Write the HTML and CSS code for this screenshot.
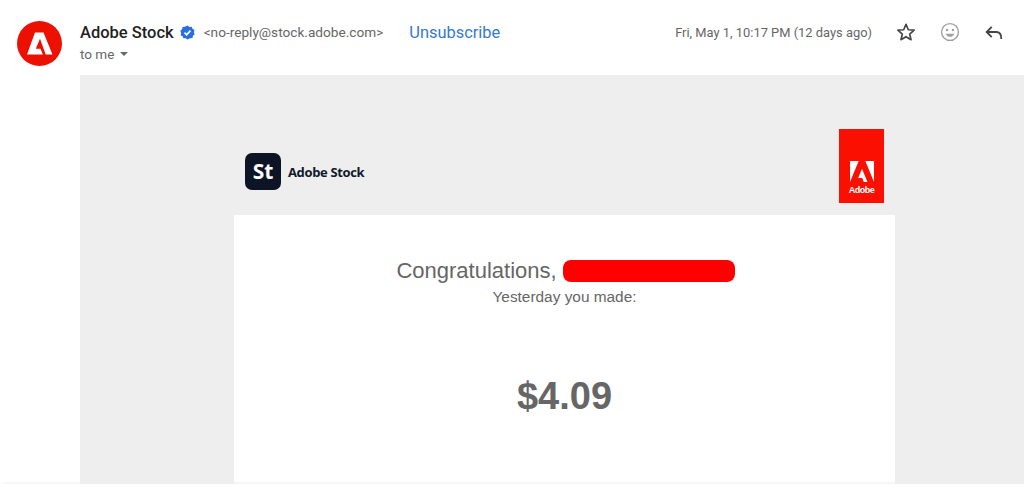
FILE: index.html
```html
<!DOCTYPE html>
<html lang="en">
<head>
<meta charset="utf-8">
<title>Adobe Stock email</title>
<link rel="stylesheet" href="styles.css">
</head>
<body>
<div class="page">
  <header class="mail-head">
    <svg class="avatar" viewBox="0 0 45 45" aria-hidden="true">
      <circle cx="22.5" cy="22.5" r="22.500" fill="#eb1000"/>
      <path fill="#fff" d="M18 11.500h8.500L35.500 33.500h-6.800l-5.700-15.800-4.200 10h4.700l2.400 5.800H10z"/>
    </svg>
    <div class="sender">
      <div class="sender-line">
        <span class="name">Adobe Stock</span>
        <svg class="verified" viewBox="0 0 16 16" aria-hidden="true">
          <path fill="#2a6fdb" d="M8 .6l2 1.400 2.400-.2.900 2.200 2.100 1.200-.6 2.400.9 2.300-1.900 1.500-.5 2.400-2.400.3L8 15.400l-2-1.400-2.400.2-.9-2.200L.6 10.800l.6-2.400-.9-2.300 1.900-1.500.5-2.400 2.400-.3z"/>
          <path fill="none" stroke="#fff" stroke-width="1.800" d="M4.800 8.200l2.200 2.200 4.200-4.400"/>
        </svg>
        <span class="address">&lt;no-reply@stock.adobe.com&gt;</span>
        <span class="unsub">Unsubscribe</span>
      </div>
      <div class="to-line">to me <span class="caret"></span></div>
    </div>
    <div class="meta">
      <span class="date">Fri, May 1, 10:17 PM (12 days ago)</span>
      <svg class="icon" viewBox="0 0 24 24" aria-hidden="true">
        <path fill="none" stroke="#444" stroke-width="1.800" stroke-linejoin="round" d="M12 3.600l2.500 5.900 6.400.5-4.900 4.200 1.500 6.200-5.500-3.300-5.500 3.300 1.500-6.200-4.900-4.200 6.400-.5z"/>
      </svg>
      <svg class="icon" viewBox="0 0 24 24" aria-hidden="true">
        <circle cx="12" cy="12" r="9.200" fill="none" stroke="#a0a0a0" stroke-width="1.500"/>
        <circle cx="8.800" cy="9.800" r="1.300" fill="#a0a0a0"/>
        <circle cx="15.200" cy="9.800" r="1.300" fill="#a0a0a0"/>
        <path fill="#a0a0a0" d="M7.300 13.800h9.400c-.8 2.200-2.500 3.500-4.700 3.500s-3.900-1.300-4.700-3.500z"/>
      </svg>
      <svg class="icon" viewBox="0 0 24 24" aria-hidden="true">
        <path fill="none" stroke="#444" stroke-width="2" d="M9.500 6.500L4 12l5.500 5.500M4 12h10.500c3.800 0 5.500 2.400 5.500 7.500"/>
      </svg>
    </div>
  </header>
  <div class="rule-wrap">
    <main class="mail-body">
      <div class="column">
        <div class="brand-row">
          <div class="stock-brand">
            <div class="st-tile">St</div>
            <span class="stock-word">Adobe Stock</span>
          </div>
          <div class="adobe-tag">
            <svg class="adobe-mark" viewBox="0 0 24 22" aria-hidden="true">
              <path fill="#fff" d="M0 0h8.700L0 21zM24 0h-8.700L24 21zM12 7.700L17.500 21h-3.700l-1.600-4.100h-4z"/>
            </svg>
            <span class="adobe-word">Adobe</span>
          </div>
        </div>
        <section class="card">
          <h1 class="congrats">Congratulations, <span class="redact"></span></h1>
          <p class="made">Yesterday you made:</p>
          <p class="amount">$4.09</p>
        </section>
      </div>
    </main>
  </div>
</div>
</body>
</html>
```
FILE: styles.css
```css
* { box-sizing: border-box; }

html, body {
  margin: 0;
  padding: 0;
  background: #fff;
}

.page {
  width: 1024px;
  height: 502px;
  overflow: hidden;
  font-family: Roboto, "Liberation Sans", sans-serif;
}

.mail-head {
  height: 75px;
  display: flex;
  align-items: flex-start;
  padding: 21px 19px 0 17px;
}

.avatar {
  width: 45px;
  height: 45px;
  flex: none;
}

.sender {
  margin-left: 18px;
  flex: 1;
}

.sender-line {
  display: flex;
  align-items: center;
  height: 22px;
}

.name {
  font-size: 16.500px;
  font-weight: 500;
  color: #1f1f1f;
}

.verified {
  width: 15px;
  height: 15px;
  margin-left: 6px;
}

.address {
  font-size: 13.650px;
  color: #666;
  margin-left: 9px;
}

.unsub {
  font-size: 16.400px;
  color: #3579d2;
  margin-left: 26px;
}

.to-line {
  font-size: 13.500px;
  color: #666;
  margin-top: 3px;
  display: flex;
  align-items: center;
  gap: 6px;
}

.caret {
  width: 0;
  height: 0;
  border-left: 4.500px solid transparent;
  border-right: 4.500px solid transparent;
  border-top: 4.500px solid #666;
}

.meta {
  display: flex;
  align-items: center;
  height: 22px;
}

.date {
  font-size: 12.900px;
  color: #666;
  margin-right: 23px;
}

.icon {
  width: 22px;
  height: 22px;
  margin-left: 22px;
}

.date + .icon { margin-left: 0; }

.rule-wrap {
  height: 409px;
  margin-left: 3px;
  border-bottom: 2px solid #f6f6f6;
}

.mail-body {
  margin-left: 77px;
  height: 409px;
  background: #eee;
  padding-left: 154px;
}

.column { width: 661px; }

.brand-row {
  height: 140px;
  display: flex;
  justify-content: space-between;
  align-items: flex-start;
  padding: 54px 11px 0;
}

.stock-brand {
  display: flex;
  align-items: center;
  gap: 7px;
  margin-top: 24px;
}

.st-tile {
  width: 36px;
  height: 37px;
  border-radius: 7px;
  background: #0d1426;
  color: #fff;
  font-family: "Open Sans", sans-serif;
  font-weight: 700;
  font-size: 21px;
  line-height: 37px;
  text-align: center;
}

.stock-word {
  font-family: "Open Sans", sans-serif;
  font-weight: 700;
  font-size: 13px;
  color: #101829;
  letter-spacing: -0.350px;
}

.adobe-tag {
  width: 45px;
  height: 74px;
  background: #fa0f00;
  display: flex;
  flex-direction: column;
  align-items: center;
  justify-content: flex-end;
  padding-bottom: 8px;
}

.adobe-mark {
  width: 24px;
  height: 22px;
}

.adobe-word {
  font-family: "Liberation Sans", sans-serif;
  font-size: 9px;
  font-weight: 700;
  letter-spacing: -0.500px;
  color: #fff;
  margin-top: 3px;
  line-height: 9px;
}

.card {
  height: 269px;
  background: #fff;
  border-bottom: 2px solid #f6f6f6;
  text-align: center;
  padding-top: 43px;
  font-family: "Liberation Sans", Arial, sans-serif;
  color: #666;
}

.congrats {
  margin: 0;
  padding-left: 2px;
  font-size: 22px;
  font-weight: 400;
  line-height: 25px;
  display: flex;
  justify-content: center;
  align-items: center;
  gap: 6px;
}

.redact {
  display: block;
  width: 172px;
  height: 22px;
  background: #fe0000;
  border-radius: 8px;
}

.made {
  margin: 4px 0 0;
  font-size: 15.400px;
  line-height: 20px;
}

.amount {
  margin: 66px 0 0;
  font-size: 38px;
  font-weight: 700;
  line-height: 46px;
}
```
